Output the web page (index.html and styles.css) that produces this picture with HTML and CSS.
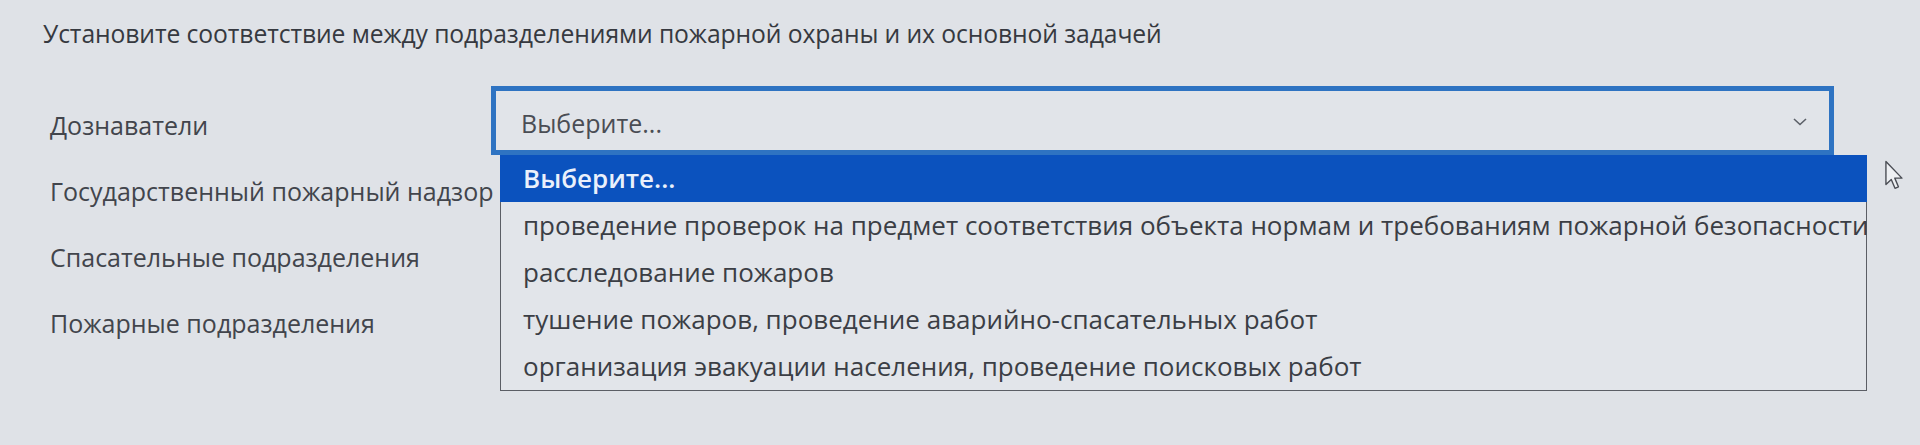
FILE: index.html
```html
<!DOCTYPE html>
<html lang="ru">
<head>
<meta charset="utf-8">
<title>Установите соответствие</title>
<link rel="stylesheet" href="styles.css">
</head>
<body>
<div class="page">
  <h1 class="title">Установите соответствие между подразделениями пожарной охраны и их основной задачей</h1>
  <div class="matching">
    <div class="label">Дознаватели</div>
    <div class="cell">
      <div class="select">
        <span class="select-value">Выберите...</span>
        <svg class="chevron" width="14" height="8" viewBox="0 0 14 8"><path d="M1 1 L7 6.5 L13 1" fill="none" stroke="#5c6068" stroke-width="1.6"/></svg>
      </div>
      <ul class="options">
        <li class="option selected">Выберите...</li>
        <li class="option">проведение проверок на предмет соответствия объекта нормам и требованиям пожарной безопасности</li>
        <li class="option">расследование пожаров</li>
        <li class="option">тушение пожаров, проведение аварийно-спасательных работ</li>
        <li class="option">организация эвакуации населения, проведение поисковых работ</li>
      </ul>
    </div>
    <div class="label">Государственный пожарный надзор</div>
    <div class="cell"></div>
    <div class="label">Спасательные подразделения</div>
    <div class="cell"></div>
    <div class="label">Пожарные подразделения</div>
    <div class="cell"></div>
  </div>
  <svg class="cursor" width="22" height="32" viewBox="0 0 20 30"><path d="M1.5 1.5 L1.5 23 L6.5 18.2 L10 26.5 L13.2 25.1 L9.8 17 L16.5 17 Z" fill="#eef0f3" stroke="#4a4d54" stroke-width="1.3" stroke-linejoin="round"/></svg>
</div>
</body>
</html>
```
FILE: styles.css
```css
html, body {
  margin: 0;
  padding: 0;
}
body {
  background: #dfe2e7;
  font-family: "Open Sans", "Noto Sans", sans-serif;
  color: #3b3e45;
  width: 1920px;
  height: 445px;
  overflow: hidden;
}
.page {
  position: relative;
  padding: 18px 0 0 43px;
}
.title {
  margin: 0;
  font-size: 24.7px;
  line-height: 32px;
  font-weight: 400;
  color: #363940;
  letter-spacing: -0.1px;
  white-space: nowrap;
}
.matching {
  margin-top: 36px;
  display: grid;
  grid-template-columns: 448px 1343px;
  grid-auto-rows: 66px;
}
.label {
  padding: 23px 0 0 7px;
  font-size: 25px;
  line-height: 32px;
  color: #42454c;
  white-space: nowrap;
}
.cell {
  position: relative;
}
.select {
  box-sizing: border-box;
  height: 69px;
  border: 5px solid #2e73c2;
  background: #e1e4e9;
  display: flex;
  align-items: center;
  justify-content: space-between;
  padding: 0 22px 0 25px;
}
.select-value {
  font-size: 25px;
  line-height: 32px;
  color: #4a4d54;
  padding-top: 4px;
}
.chevron {
  margin-top: 2px;
}
.options {
  position: absolute;
  top: 69px;
  left: 9px;
  width: 1367px;
  margin: 0;
  padding: 0;
  list-style: none;
  background: #e2e5ea;
  border: 1px solid #5b5e65;
  border-top: none;
  box-sizing: border-box;
  z-index: 2;
}
.option {
  height: 47px;
  line-height: 47px;
  font-size: 26px;
  padding-left: 22px;
  color: #3b3e45;
  white-space: nowrap;
}
.option.selected {
  background: #0b52be;
  color: #eaf0fb;
  font-weight: 600;
  margin: 0 -1px;
  padding-left: 23px;
}
.cursor {
  position: absolute;
  left: 1884px;
  top: 160px;
  z-index: 3;
}
```
